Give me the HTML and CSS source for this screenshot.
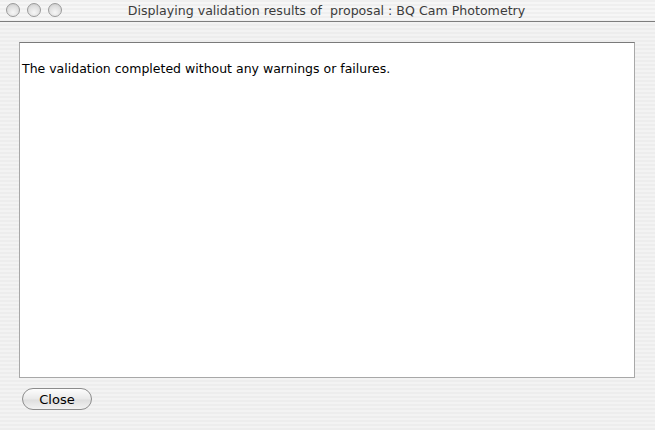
FILE: index.html
```html
<!DOCTYPE html>
<html lang="en">
<head>
    <meta charset="utf-8">
    <title>Validation Results</title>
    <link rel="stylesheet" href="styles.css">
</head>
<body>
    <div class="window">
        <div class="titlebar">
            <div class="lights">
                <span class="light"></span>
                <span class="light"></span>
                <span class="light"></span>
            </div>
            <div class="title">Displaying validation results of  proposal : BQ Cam Photometry</div>
        </div>
        <div class="content">
            <div class="results">The validation completed without any warnings or failures.</div>
            <div class="actions">
                <button class="btn" type="button">Close</button>
            </div>
        </div>
    </div>
</body>
</html>
```

FILE: styles.css
```css
html, body {
    margin: 0;
    height: 100%;
}
body {
    font-family: "DejaVu Sans", "Liberation Sans", sans-serif;
    color: #000;
    background: repeating-linear-gradient(#ededed 0 2px, #f3f3f3 2px 4px);
}
.window {
    width: 655px;
    height: 430px;
    display: flex;
    flex-direction: column;
}
.titlebar {
    position: relative;
    height: 21px;
    border-bottom: 1px solid #7d7d7d;
    display: flex;
    align-items: center;
    justify-content: center;
    background: repeating-linear-gradient(#efefef 0 2px, #f6f6f6 2px 4px);
}
.lights {
    position: absolute;
    left: 6px;
    top: 3px;
    display: flex;
    gap: 7px;
}
.light {
    width: 12px;
    height: 12px;
    border-radius: 50%;
    border: 1px solid #9a9a9a;
    background: radial-gradient(circle at 50% 70%, #f6f6f6 0, #dedede 60%, #c2c2c2 100%);
}
.title {
    font-size: 12.6px;
    color: #3c3c3c;
    white-space: pre;
    margin-left: -2px;
}
.content {
    flex: 1;
    padding: 20px 20px 0 19px;
    display: flex;
    flex-direction: column;
}
.results {
    height: 316px;
    background: #fff;
    border: 1px solid #a8a8a8;
    border-top-color: #7a7a7a;
    padding: 18px 2px 0 2px;
    font-size: 12.5px;
    line-height: 15px;
}
.actions {
    padding-top: 10px;
    padding-left: 3px;
}
.btn {
    width: 70px;
    height: 22px;
    border: 1px solid #8c8c8c;
    border-radius: 11px;
    background: linear-gradient(#fdfdfd 0, #e9e9e9 50%, #dedede 55%, #f2f2f2 100%);
    font-family: "DejaVu Sans", "Liberation Sans", sans-serif;
    font-size: 13px;
    color: #000;
    padding: 0;
}
```
